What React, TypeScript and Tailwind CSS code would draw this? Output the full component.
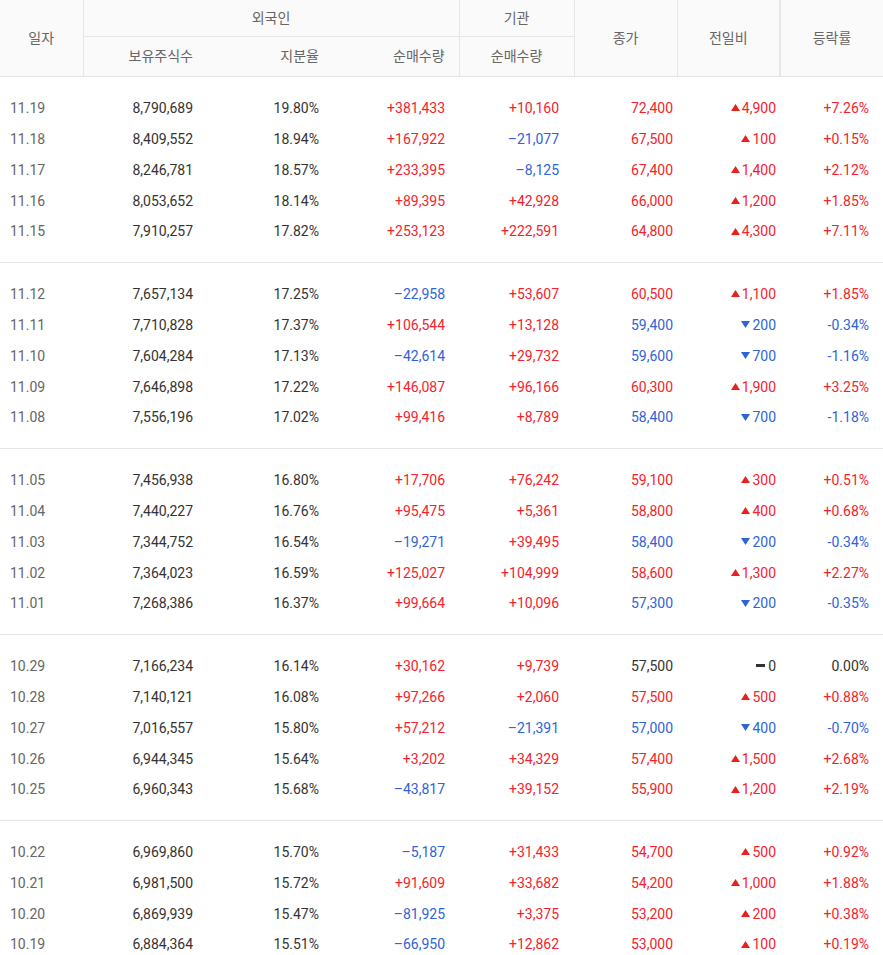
import React from "react";

type Row = [string, string, string, string, string, string, string, string];

// date, holdings, ratio, foreign net, inst net, close, diff (signed), rate
const GROUPS: Row[][] = [
  [
    ["11.19", "8,790,689", "19.80%", "+381,433", "+10,160", "72,400", "+4,900", "+7.26%"],
    ["11.18", "8,409,552", "18.94%", "+167,922", "–21,077", "67,500", "+100", "+0.15%"],
    ["11.17", "8,246,781", "18.57%", "+233,395", "–8,125", "67,400", "+1,400", "+2.12%"],
    ["11.16", "8,053,652", "18.14%", "+89,395", "+42,928", "66,000", "+1,200", "+1.85%"],
    ["11.15", "7,910,257", "17.82%", "+253,123", "+222,591", "64,800", "+4,300", "+7.11%"],
  ],
  [
    ["11.12", "7,657,134", "17.25%", "–22,958", "+53,607", "60,500", "+1,100", "+1.85%"],
    ["11.11", "7,710,828", "17.37%", "+106,544", "+13,128", "59,400", "-200", "-0.34%"],
    ["11.10", "7,604,284", "17.13%", "–42,614", "+29,732", "59,600", "-700", "-1.16%"],
    ["11.09", "7,646,898", "17.22%", "+146,087", "+96,166", "60,300", "+1,900", "+3.25%"],
    ["11.08", "7,556,196", "17.02%", "+99,416", "+8,789", "58,400", "-700", "-1.18%"],
  ],
  [
    ["11.05", "7,456,938", "16.80%", "+17,706", "+76,242", "59,100", "+300", "+0.51%"],
    ["11.04", "7,440,227", "16.76%", "+95,475", "+5,361", "58,800", "+400", "+0.68%"],
    ["11.03", "7,344,752", "16.54%", "–19,271", "+39,495", "58,400", "-200", "-0.34%"],
    ["11.02", "7,364,023", "16.59%", "+125,027", "+104,999", "58,600", "+1,300", "+2.27%"],
    ["11.01", "7,268,386", "16.37%", "+99,664", "+10,096", "57,300", "-200", "-0.35%"],
  ],
  [
    ["10.29", "7,166,234", "16.14%", "+30,162", "+9,739", "57,500", "0", "0.00%"],
    ["10.28", "7,140,121", "16.08%", "+97,266", "+2,060", "57,500", "+500", "+0.88%"],
    ["10.27", "7,016,557", "15.80%", "+57,212", "–21,391", "57,000", "-400", "-0.70%"],
    ["10.26", "6,944,345", "15.64%", "+3,202", "+34,329", "57,400", "+1,500", "+2.68%"],
    ["10.25", "6,960,343", "15.68%", "–43,817", "+39,152", "55,900", "+1,200", "+2.19%"],
  ],
  [
    ["10.22", "6,969,860", "15.70%", "–5,187", "+31,433", "54,700", "+500", "+0.92%"],
    ["10.21", "6,981,500", "15.72%", "+91,609", "+33,682", "54,200", "+1,000", "+1.88%"],
    ["10.20", "6,869,939", "15.47%", "–81,925", "+3,375", "53,200", "+200", "+0.38%"],
    ["10.19", "6,884,364", "15.51%", "–66,950", "+12,862", "53,000", "+100", "+0.19%"],
  ],
];

const RED = "text-[#f5222d]";
const BLUE = "text-[#2f63d8]";
const DARK = "text-[#333]";

function tone(v: string) {
  if (v.startsWith("+")) return RED;
  if (v.startsWith("-") || v.startsWith("–")) return BLUE;
  return DARK;
}

function Diff({ v }: { v: string }) {
  const num = v.replace(/^[+-]/, "");
  if (v.startsWith("+"))
    return (
      <span className={`inline-flex items-center gap-[2px] align-top ${RED}`}>
        <svg width="9" height="7" viewBox="0 0 9 7">
          <polygon points="4.5,0 9,7 0,7" fill="#e8201f" />
        </svg>
        {num}
      </span>
    );
  if (v.startsWith("-"))
    return (
      <span className={`inline-flex items-center gap-[2px] align-top ${BLUE}`}>
        <svg width="9" height="7" viewBox="0 0 9 7">
          <polygon points="0,0 9,0 4.5,7" fill="#2f63d8" />
        </svg>
        {num}
      </span>
    );
  return (
    <span className={`inline-flex items-center gap-[3px] align-top ${DARK}`}>
      <span className="inline-block w-[9px] h-[3px] bg-[#333]" />
      {num}
    </span>
  );
}

function Group({ rows }: { rows: Row[] }) {
  return (
    <tbody className="border-b border-[#e6e6e9]">
      {rows.map((r, i) => {
        const first = i === 0;
        const last = i === rows.length - 1;
        const pad = `${first ? "pt-[16px]" : ""} ${last ? "pb-[15px]" : ""}`;
        const h = first && last ? "h-[62px]" : first ? "h-[47px]" : last ? "h-[46px]" : "h-[31px]";
        const closeTone = tone(r[6]);
        return (
          <tr key={r[0]} className={h}>
            <td className={`pl-[10px] text-left text-[#666] ${pad}`}>{r[0]}</td>
            <td className={`pr-[15px] text-right ${DARK} ${pad}`}>{r[1]}</td>
            <td className={`pr-[15px] text-right ${DARK} ${pad}`}>{r[2]}</td>
            <td className={`pr-[14px] text-right ${tone(r[3])} ${pad}`}>{r[3]}</td>
            <td className={`pr-[15px] text-right ${tone(r[4])} ${pad}`}>{r[4]}</td>
            <td className={`pr-[4px] text-right ${closeTone} ${pad}`}>{r[5]}</td>
            <td className={`pr-[4px] text-right ${pad}`}>
              <Diff v={r[6]} />
            </td>
            <td className={`pr-[14px] text-right ${tone(r[7])} ${pad}`}>{r[7]}</td>
          </tr>
        );
      })}
    </tbody>
  );
}

export default function App() {
  return (
    <div
      className="w-[883px] bg-white text-[14px] leading-[20px]"
      style={{ fontFamily: 'Roboto, "Noto Sans CJK KR", sans-serif' }}
    >
      <table className="w-[883px] table-fixed border-collapse">
        <colgroup>
          <col className="w-[83px]" />
          <col className="w-[125px]" />
          <col className="w-[126px]" />
          <col className="w-[125px]" />
          <col className="w-[115px]" />
          <col className="w-[103px]" />
          <col className="w-[103px]" />
          <col className="w-[103px]" />
        </colgroup>
        <thead className="bg-[#fafafa] text-[#666] font-normal">
          <tr className="h-[36px]">
            <th rowSpan={2} className="font-normal border-r border-[#e6e6e9]">일자</th>
            <th colSpan={3} className="font-normal border-r border-b border-[#e6e6e9]">외국인</th>
            <th className="font-normal border-r border-b border-[#e6e6e9]">기관</th>
            <th rowSpan={2} className="font-normal border-r border-[#e6e6e9]">종가</th>
            <th rowSpan={2} className="font-normal border-r-2 border-[#e6e6e9]">전일비</th>
            <th rowSpan={2} className="font-normal">등락률</th>
          </tr>
          <tr className="h-[40px] border-b border-[#e6e6e9]">
            <th className="font-normal text-right pr-[15px]">보유주식수</th>
            <th className="font-normal text-right pr-[15px]">지분율</th>
            <th className="font-normal text-right pr-[14px] border-r border-[#e6e6e9]">순매수량</th>
            <th className="font-normal border-r border-[#e6e6e9]">순매수량</th>
          </tr>
        </thead>
        {GROUPS.map((g, i) => (
          <Group key={i} rows={g} />
        ))}
      </table>
    </div>
  );
}
